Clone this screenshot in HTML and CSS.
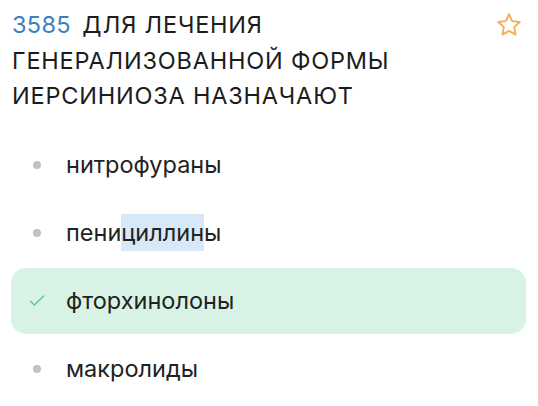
FILE: index.html
```html
<!DOCTYPE html>
<html lang="ru">
<head>
  <meta charset="UTF-8" />
  <meta name="viewport" content="width=device-width, initial-scale=1.0" />
  <title>Вопрос 3585</title>
  <link rel="stylesheet" href="styles.css">
</head>
<body>
  <div class="question">
    <div class="question-head">
      <h2 class="question-title"><span class="question-num">3585</span> ДЛЯ ЛЕЧЕНИЯ ГЕНЕРАЛИЗОВАННОЙ ФОРМЫ ИЕРСИНИОЗА НАЗНАЧАЮТ</h2>
      <button class="fav" aria-label="В избранное">
        <svg width="28" height="28" viewBox="0 0 24 24" fill="none" stroke="#f6ad5a" stroke-width="1.6" stroke-linejoin="round">
          <path d="M12 2.8l2.75 5.9 6.45.75-4.8 4.4 1.3 6.35L12 17l-5.7 3.2 1.3-6.35-4.8-4.4 6.45-.75z"/>
        </svg>
      </button>
    </div>

    <ul class="answers">
      <li class="answer"><span class="mark"><span class="dot"></span></span>нитрофураны</li>
      <li class="answer"><span class="mark"><span class="dot"></span></span>пени<span class="picked">циллин</span>ы</li>
      <li class="answer correct">
        <span class="mark">
          <svg width="16" height="16" viewBox="0 0 16 16" fill="none" stroke="#5cc995" stroke-width="1.5" stroke-linecap="round" stroke-linejoin="round">
            <path d="M1.5 8.5l4 3.5 9-9"/>
          </svg>
        </span>фторхинолоны</li>
      <li class="answer"><span class="mark"><span class="dot"></span></span>макролиды</li>
    </ul>
  </div>
</body>
</html>
```

FILE: styles.css
```css
* { box-sizing: border-box; margin: 0; padding: 0; }
body {
  font-family: Inter, 'Noto Sans', sans-serif;
  background: #fff;
  color: #1c1c1c;
}

.question-head {
  display: flex;
  align-items: flex-start;
  padding: 7px 14px 0 12px;
}

.question-title {
  flex: 1;
  font-size: 23.5px;
  font-weight: 400;
  line-height: 35.5px;
  letter-spacing: 0.8px;
  color: #1c1c1c;
}

.question-num {
  color: #3b80c2;
  letter-spacing: 0.3px;
  margin-right: 4px;
}

.fav {
  border: none;
  background: none;
  margin-top: 4px;
  margin-right: 1px;
  display: flex;
}

.answers {
  list-style: none;
  margin-top: 18px;
}

.answer {
  display: flex;
  align-items: center;
  height: 66px;
  margin: 0 12px 2px 11px;
  padding-left: 18px;
  font-size: 23.5px;
  color: #222;
  border-radius: 15px;
}

.answer.correct {
  background: #d8f3e6;
}

.mark {
  width: 16px;
  height: 16px;
  margin-right: 21px;
  display: flex;
  align-items: center;
  justify-content: center;
}

.dot {
  width: 8px;
  height: 8px;
  border-radius: 50%;
  background: #c2c2c2;
}

.picked {
  background: #d7e8f8;
  padding: 4px 0;
}
```
